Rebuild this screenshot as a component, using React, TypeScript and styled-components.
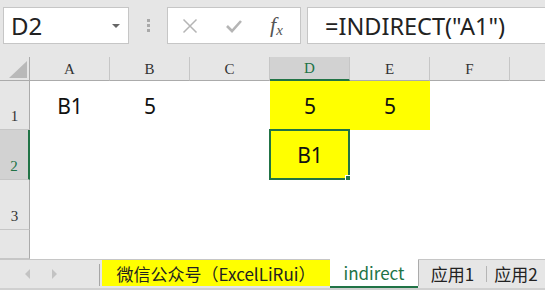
import React from 'react'
import styled, { createGlobalStyle } from 'styled-components'

const GREEN = '#217346'

const Global = createGlobalStyle`
  html, body { margin: 0; padding: 0; background: #e6e6e6; }
  body { width: 545px; height: 290px; overflow: hidden; font-family: "Noto Sans", "Noto Sans CJK SC", sans-serif; }
`

const cols = ['A', 'B', 'C', 'D', 'E', 'F', '']

type Cell = { text?: string; fill?: boolean; active?: boolean }
const rows: { n: string; h: number; cells: Cell[] }[] = [
  { n: '1', h: 49, cells: [{ text: 'B1' }, { text: '5' }, {}, { text: '5', fill: true }, { text: '5', fill: true }, {}, {}] },
  { n: '2', h: 50, cells: [{}, {}, {}, { text: 'B1', fill: true, active: true }, {}, {}, {}] },
  { n: '3', h: 50, cells: [{}, {}, {}, {}, {}, {}, {}] },
  { n: '', h: 29, cells: [{}, {}, {}, {}, {}, {}, {}] },
]

const App = () => {
  return (
    <Page>
      <Global />
      <TopBar>
        <NameBox>
          <span>D2</span>
          <Caret />
        </NameBox>
        <Grip>
          <i /><i /><i />
        </Grip>
        <FxButtons>
          <svg width="16" height="16" viewBox="0 0 16 16">
            <path d="M1.5 1.5 L14.5 14.5 M14.5 1.5 L1.5 14.5" stroke="#b5b5b5" strokeWidth="1.5" fill="none" />
          </svg>
          <svg width="16" height="16" viewBox="0 0 16 16">
            <path d="M1 8 L6 13 L15 3" stroke="#b5b5b5" strokeWidth="2.6" fill="none" />
          </svg>
          <Fx>f<sub>x</sub></Fx>
        </FxButtons>
        <Formula>=INDIRECT("A1")</Formula>
      </TopBar>
      <Sheet>
        <Corner>
          <svg width="18" height="17" viewBox="0 0 18 17">
            <polygon points="18,0 18,17 0,17" fill="#b9b9b9" />
          </svg>
        </Corner>
        {cols.map((c, i) => (
          <ColHead key={i} $sel={c === 'D'} $last={i === cols.length - 1}>{c}</ColHead>
        ))}
        {rows.map((r) => (
          <React.Fragment key={r.n + r.h}>
            <RowHead $sel={r.n === '2'} $h={r.h}>{r.n}</RowHead>
            {r.cells.map((cell, j) => (
              <CellBox key={j} $fill={cell.fill} $h={r.h}>
                {cell.active && <ActiveFrame><Handle /></ActiveFrame>}
                {cell.text}
              </CellBox>
            ))}
          </React.Fragment>
        ))}
      </Sheet>
      <TabBar>
        <Arrows>
          <Arrow $dir="left" />
          <Arrow $dir="right" />
        </Arrows>
        <TabSep />
        <Tab $yellow $w={228}>微信公众号（ExcelLiRui）</Tab>
        <Tab $active $w={88}>indirect</Tab>
        <Tab $w={68} $plain>应用1</Tab>
        <SmallSep />
        <Tab $w={58} $plain $noBorder>应用2</Tab>
      </TabBar>
    </Page>
  )
}

export default App

const Page = styled.div`
  width: 545px;
  height: 290px;
  background: #e6e6e6;
  display: flex;
  flex-direction: column;
  overflow: hidden;
`
const TopBar = styled.div`
  height: 57px;
  box-sizing: border-box;
  padding: 7px 0 13px 3px;
  display: flex;
  align-items: stretch;
`
const NameBox = styled.div`
  width: 126px;
  box-sizing: border-box;
  background: #fff;
  border: 1px solid #c6c6c6;
  display: flex;
  align-items: center;
  justify-content: space-between;
  padding: 0 8px 0 7px;
  font-size: 24px;
  color: #222;
`
const Caret = styled.div`
  width: 0;
  height: 0;
  border-left: 4px solid transparent;
  border-right: 4px solid transparent;
  border-top: 4px solid #666;
`
const Grip = styled.div`
  width: 38px;
  display: flex;
  flex-direction: column;
  align-items: center;
  justify-content: center;
  gap: 2px;
  i {
    width: 3px;
    height: 3px;
    background: #a9a9a9;
  }
`
const FxButtons = styled.div`
  width: 134px;
  box-sizing: border-box;
  background: #fff;
  border: 1px solid #c6c6c6;
  display: flex;
  align-items: center;
  gap: 28px;
  padding: 0 0 0 14px;
`
const Fx = styled.span`
  font-family: "Liberation Serif", serif;
  font-style: italic;
  font-size: 22px;
  color: #555;
  line-height: 1;
  sub {
    font-size: 15px;
    vertical-align: -3px;
  }
`
const Formula = styled.div`
  flex: 1;
  margin-left: 6px;
  background: #fff;
  border: 1px solid #c6c6c6;
  border-right: none;
  display: flex;
  align-items: center;
  padding-left: 17px;
  font-size: 23.5px;
  color: #222;
  white-space: nowrap;
`
const Sheet = styled.div`
  display: grid;
  grid-template-columns: 30px repeat(6, 80px) 1fr;
  grid-template-rows: 24px;
  background: #fff;
  flex: 1;
  overflow: hidden;
`
const Corner = styled.div`
  background: #e6e6e6;
  border-right: 1px solid #ababab;
  border-bottom: 1px solid #ababab;
  box-sizing: border-box;
  display: flex;
  align-items: flex-end;
  justify-content: flex-end;
  padding: 0 2px 2px 0;
`
const ColHead = styled.div<{ $sel?: boolean; $last?: boolean }>`
  height: 24px;
  box-sizing: border-box;
  background: ${(p) => (p.$sel ? '#d2d2d2' : '#e6e6e6')};
  border-right: ${(p) => (p.$last ? 'none' : '1px solid #c6c6c6')};
  border-bottom: ${(p) => (p.$sel ? `2px solid ${GREEN}` : '1px solid #ababab')};
  font-family: "Liberation Serif", serif;
  font-size: 15px;
  color: ${(p) => (p.$sel ? GREEN : '#333')};
  display: flex;
  align-items: center;
  justify-content: center;
  padding-top: 1px;
`
const RowHead = styled.div<{ $sel?: boolean; $h: number }>`
  height: ${(p) => p.$h}px;
  box-sizing: border-box;
  background: ${(p) => (p.$sel ? '#d2d2d2' : '#e6e6e6')};
  border-right: ${(p) => (p.$sel ? `2px solid ${GREEN}` : '1px solid #ababab')};
  border-bottom: 1px solid #c6c6c6;
  font-family: "Liberation Serif", serif;
  font-size: 15px;
  color: ${(p) => (p.$sel ? GREEN : '#333')};
  display: flex;
  align-items: flex-end;
  justify-content: center;
  padding-bottom: 4px;
`
const CellBox = styled.div<{ $fill?: boolean; $h: number }>`
  height: ${(p) => p.$h}px;
  position: relative;
  background: ${(p) => (p.$fill ? '#ffff00' : '#fff')};
  display: flex;
  align-items: center;
  justify-content: center;
  font-size: 21px;
  color: #111;
`
const ActiveFrame = styled.div`
  position: absolute;
  inset: -1px 0 0 -1px;
  border: 2px solid ${GREEN};
`
const Handle = styled.div`
  position: absolute;
  right: -4px;
  bottom: -4px;
  width: 5px;
  height: 5px;
  background: ${GREEN};
  border: 1px solid #fff;
`
const TabBar = styled.div`
  height: 31px;
  box-sizing: border-box;
  border-top: 1px solid #c6c6c6;
  border-bottom: 2px solid #d0d0d0;
  background: #e6e6e6;
  display: flex;
  align-items: stretch;
`
const Arrows = styled.div`
  width: 99px;
  display: flex;
  align-items: center;
  padding-left: 25px;
  gap: 22px;
  box-sizing: border-box;
`
const Arrow = styled.div<{ $dir: 'left' | 'right' }>`
  width: 0;
  height: 0;
  border-top: 5px solid transparent;
  border-bottom: 5px solid transparent;
  ${(p) => (p.$dir === 'left' ? 'border-right: 5px solid #c3c3c3;' : 'border-left: 5px solid #c3c3c3;')}
`
const TabSep = styled.div`
  width: 1px;
  background: #a6a6a6;
  margin: 4px 2px 2px 0;
`
const Tab = styled.div<{ $yellow?: boolean; $active?: boolean; $w: number; $plain?: boolean; $noBorder?: boolean }>`
  width: ${(p) => p.$w}px;
  box-sizing: border-box;
  background: ${(p) => (p.$yellow ? '#ffff00' : p.$active ? '#fff' : '#e6e6e6')};
  color: ${(p) => (p.$active ? GREEN : '#222')};
  border-bottom: ${(p) => (p.$active ? `2px solid ${GREEN}` : 'none')};
  border-left: ${(p) => (p.$plain && !p.$noBorder ? '1px solid #ababab' : 'none')};
  margin-bottom: ${(p) => (p.$active ? '0' : '2px')};
  margin-top: ${(p) => (p.$active ? '-1px' : '0')};
  font-family: "Noto Sans CJK SC", "Noto Sans", sans-serif;
  font-size: 17px;
  display: flex;
  align-items: center;
  justify-content: center;
  white-space: nowrap;
`
const SmallSep = styled.div`
  width: 1px;
  background: #b5b5b5;
  margin: 6px 0 6px;
`
